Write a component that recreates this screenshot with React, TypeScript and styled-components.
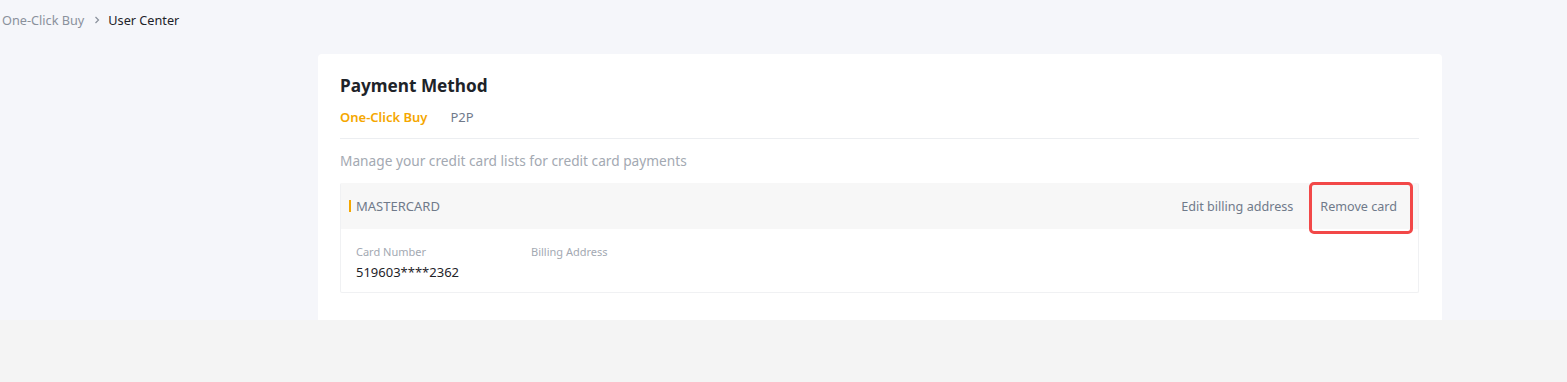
import React from "react";
import styled, { createGlobalStyle } from "styled-components";

const GlobalStyle = createGlobalStyle`
  body {
    margin: 0;
    background: #f4f4f4;
    font-family: "Noto Sans", "Liberation Sans", sans-serif;
    color: #1e2329;
  }
`;

const Top = styled.div`
  background: #f5f6fa;
  height: 320px;
  display: flex;
  flex-direction: column;
`;

const Breadcrumb = styled.nav`
  display: flex;
  align-items: center;
  gap: 5px;
  height: 40px;
  padding-left: 2px;
  font-size: 12.7px;
`;

const Crumb = styled.span<{ current?: boolean }>`
  color: ${({ current }) => (current ? "#1e2329" : "#8a919c")};
`;

const Chevron = styled.svg`
  width: 10px;
  height: 10px;
  margin: 0 1px 0 3px;
`;

const Card = styled.section`
  margin: 14px 0 0 318px;
  width: 1124px;
  flex: 1;
  box-sizing: border-box;
  background: #fff;
  border-radius: 4px 4px 0 0;
  padding: 20px 23px 0 22px;
`;

const Title = styled.h2`
  margin: 0;
  font-size: 17.2px;
  line-height: 24px;
  font-weight: 700;
  color: #1e2329;
`;

const Tabs = styled.div`
  display: flex;
  gap: 23px;
  margin-top: 9px;
  padding-bottom: 11px;
  border-bottom: 1px solid #eceef1;
`;

const Tab = styled.span<{ active?: boolean }>`
  font-size: 13px;
  line-height: 20px;
  font-weight: ${({ active }) => (active ? 600 : 400)};
  color: ${({ active }) => (active ? "#f5a700" : "#707a8a")};
`;

const Description = styled.p`
  margin: 12px 0 12px;
  font-size: 13.7px;
  line-height: 20px;
  color: #a3a9b2;
`;

const CardItem = styled.div`
  border: 1px solid #f0f1f3;
  border-top: none;
  border-radius: 2px;
`;

const CardHeader = styled.div`
  display: flex;
  align-items: center;
  height: 46px;
  background: #f7f7f7;
  padding: 0 21px 0 8px;
`;

const Brand = styled.span`
  display: flex;
  align-items: center;
  gap: 5px;
  font-size: 13px;
  color: #707a8a;
  flex: 1;
  &::before {
    content: "";
    width: 2px;
    height: 12px;
    background: #f5a700;
  }
`;

const Actions = styled.div`
  display: flex;
  gap: 27px;
`;

const Action = styled.span<{ highlighted?: boolean }>`
  position: relative;
  font-size: 12.6px;
  color: #707a8a;
  &::after {
    content: "";
    display: ${({ highlighted }) => (highlighted ? "block" : "none")};
    position: absolute;
    left: -11px;
    right: -16px;
    top: -16px;
    bottom: -19px;
    border: 3px solid #f24848;
    border-radius: 5px;
  }
`;

const CardBody = styled.div`
  display: flex;
  padding: 15px 15px 10px;
`;

const Field = styled.div<{ width?: number }>`
  display: flex;
  flex-direction: column;
  gap: 2px;
  width: ${({ width }) => (width ? `${width}px` : "auto")};
`;

const Label = styled.span`
  font-size: 11px;
  line-height: 16px;
  color: #a3a9b2;
`;

const Value = styled.span`
  font-size: 13px;
  line-height: 20px;
  color: #1e2329;
`;

export default function App() {
  return (
    <>
      <GlobalStyle />
      <Top>
        <Breadcrumb>
          <Crumb>One-Click Buy</Crumb>
          <Chevron viewBox="0 0 10 10" fill="none" stroke="#8a919c" strokeWidth="1.2">
            <path d="M3.5 2l3 3-3 3" />
          </Chevron>
          <Crumb current>User Center</Crumb>
        </Breadcrumb>
        <Card>
          <Title>Payment Method</Title>
          <Tabs>
            <Tab active>One-Click Buy</Tab>
            <Tab>P2P</Tab>
          </Tabs>
          <Description>Manage your credit card lists for credit card payments</Description>
          <CardItem>
            <CardHeader>
              <Brand>MASTERCARD</Brand>
              <Actions>
                <Action>Edit billing address</Action>
                <Action highlighted>Remove card</Action>
              </Actions>
            </CardHeader>
            <CardBody>
              <Field width={175}>
                <Label>Card Number</Label>
                <Value>519603****2362</Value>
              </Field>
              <Field>
                <Label>Billing Address</Label>
              </Field>
            </CardBody>
          </CardItem>
        </Card>
      </Top>
    </>
  );
}
